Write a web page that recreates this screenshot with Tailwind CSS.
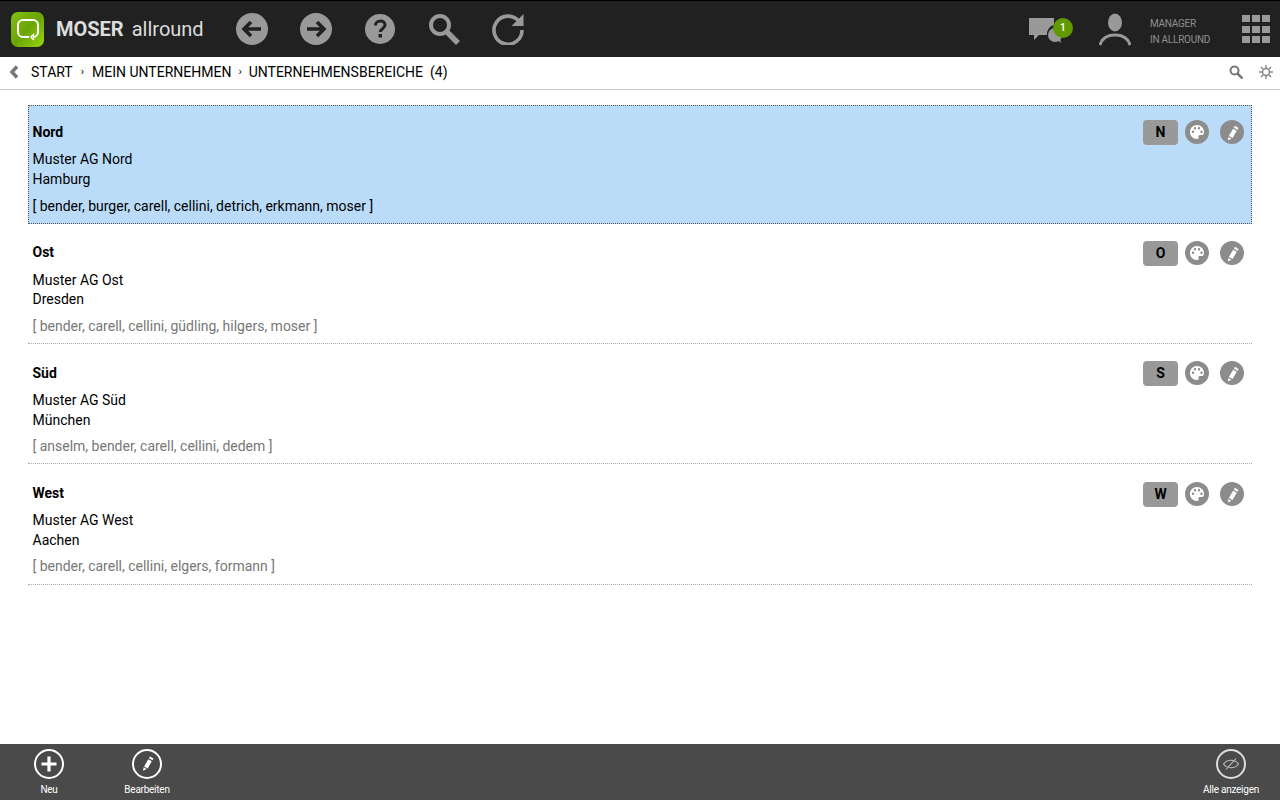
<!DOCTYPE html>
<html lang="de">
<head>
<meta charset="UTF-8">
<title>MOSER allround</title>
<script src="https://cdn.jsdelivr.net/npm/@tailwindcss/browser@4"></script>
</head>
<body class="bg-white font-['Roboto',sans-serif] text-[14px] text-black w-[1280px] h-[800px] overflow-hidden flex flex-col">

<!-- top bar -->
<header class="h-[57px] shrink-0 bg-[#212121] border-t border-black flex items-center text-[#999]">
  <div class="ml-[11px] w-[33px] h-[35px] rounded-[7px] bg-gradient-to-br from-[#86c012] via-[#69a506] to-[#9ad80e] flex items-center justify-center">
    <svg width="26" height="26" viewBox="0 0 26 26" fill="none" stroke="#fff" stroke-width="2"><path d="M14 21H8a5 5 0 0 1-5-5V9a5 5 0 0 1 5-5h10a5 5 0 0 1 5 5v7a5 5 0 0 1-5 5"/><path d="M19 18l-3 3 3 3" stroke-width="1.600"/></svg>
  </div>
  <div class="ml-[12px] w-[164px] text-[20px] text-[#ddd] whitespace-nowrap"><b class="font-bold">MOSER</b><span class="ml-2">allround</span></div>
  <div class="flex items-center">
    <div class="w-[64px] flex justify-center"><svg width="32" height="32" viewBox="0 0 32 32"><circle cx="16" cy="16" r="16" fill="#999"/><path d="M25 16H9M15 9l-7 7 7 7" fill="none" stroke="#212121" stroke-width="3.600"/></svg></div>
    <div class="w-[64px] flex justify-center"><svg width="32" height="32" viewBox="0 0 32 32"><circle cx="16" cy="16" r="16" fill="#999"/><path d="M7 16h16M17 9l7 7-7 7" fill="none" stroke="#212121" stroke-width="3.600"/></svg></div>
    <div class="w-[64px] flex justify-center"><svg width="30" height="30" viewBox="0 0 30 30"><circle cx="15" cy="15" r="15" fill="#999"/><path d="M10.500 11.500c0-6 9.500-6 9.500-.5 0 3.500-4.500 3.500-4.500 7" fill="none" stroke="#212121" stroke-width="3"/><rect x="13.500" y="20" width="3.500" height="3.500" fill="#212121"/></svg></div>
    <div class="w-[64px] flex justify-center"><svg width="32" height="32" viewBox="0 0 32 32" fill="none" stroke="#999"><circle cx="12" cy="12" r="9" stroke-width="4"/><path d="M19 19l11 11" stroke-width="5.500"/></svg></div>
    <div class="w-[64px] flex justify-center"><svg width="32" height="32" viewBox="0 0 32 32" fill="none"><path d="M27 8.500A14 14 0 1 0 30 17" stroke="#999" stroke-width="3.600"/><path d="M31.500 1v12h-12z" fill="#999"/></svg></div>
  </div>
  <div class="ml-auto flex items-center">
    <div class="relative w-[46px] h-[32px]">
      <svg width="34" height="28" viewBox="0 0 34 28" class="absolute left-0 top-[3px]" fill="#999"><path d="M0 2h25v7a9 9 0 0 0-7 10H10l-5 5v-5H0z"/><circle cx="26" cy="19" r="7"/><path d="M28 24l4 3-1-5z"/></svg>
      <span class="absolute left-[24px] top-[5px] w-5 h-5 rounded-full bg-[#5f9a00] text-white text-[11px] font-medium flex items-center justify-center">1</span>
    </div>
    <div class="ml-[24px] w-[32px]">
      <svg width="32" height="33" viewBox="0 0 32 33" fill="#999"><ellipse cx="16" cy="9.500" rx="7" ry="9"/><path d="M1 32c2-7 8-10 15-10s13 3 15 10" fill="none" stroke="#999" stroke-width="3"/></svg>
    </div>
    <div class="ml-[19px] w-[92px] pt-[6px] text-[10px] leading-[16px] tracking-[-0.25px] text-[#8f8f8f]"><div>MANAGER</div><div>IN ALLROUND</div></div>
    <div class="mr-[10px] grid grid-cols-3 gap-x-[2px] gap-y-[3.500px]">
      <i class="w-[8px] h-[7px] bg-[#999] block"></i><i class="w-[8px] h-[7px] bg-[#999] block"></i><i class="w-[8px] h-[7px] bg-[#999] block"></i>
      <i class="w-[8px] h-[7px] bg-[#999] block"></i><i class="w-[8px] h-[7px] bg-[#999] block"></i><i class="w-[8px] h-[7px] bg-[#999] block"></i>
      <i class="w-[8px] h-[7px] bg-[#999] block"></i><i class="w-[8px] h-[7px] bg-[#999] block"></i><i class="w-[8px] h-[7px] bg-[#999] block"></i>
    </div>
  </div>
</header>

<!-- breadcrumb -->
<nav class="h-[33px] shrink-0 border-b border-[#ccc] flex items-center pb-[2px] pr-[7px]">
  <svg width="11" height="14" viewBox="0 0 11 14" class="ml-[9px]"><path d="M8 1.500L3 7l5 5.500" fill="none" stroke="#777" stroke-width="3.500"/></svg>
  <span class="ml-[11px]">START</span>
  <span class="mx-[8px] text-[11px]">›</span>
  <span>MEIN UNTERNEHMEN</span>
  <span class="mx-[7px] text-[11px]">›</span>
  <span>UNTERNEHMENSBEREICHE</span>
  <span class="ml-[7px]">(4)</span>
  <svg width="14" height="14" viewBox="0 0 14 14" fill="none" stroke="#777" class="ml-auto"><circle cx="5.500" cy="5.500" r="4" stroke-width="2"/><path d="M8.500 8.500l5 5" stroke-width="2.500"/></svg>
  <svg width="14" height="14" viewBox="0 0 14 14" fill="none" stroke="#888" class="ml-[16px]"><circle cx="7" cy="7" r="3.500" stroke-width="1.500"/><path d="M7 0v3M7 11v3M0 7h3M11 7h3M2 2l2 2M10 10l2 2M12 2l-2 2M4 10l-2 2" stroke-width="1.500"/></svg>
</nav>

<!-- list -->
<main class="flex-1 pt-[15px] px-[28px]">
  <section class="h-[119px] border border-dotted border-[#555] bg-[#badcf9] pl-[3.500px] pr-1 pt-[16px] flex justify-between">
    <div>
      <div class="font-bold leading-[20px]">Nord</div>
      <div class="mt-[7px] leading-[20px]">Muster AG Nord<br>Hamburg</div>
      <div class="mt-[7px] leading-[20px]">[ bender, burger, carell, cellini, detrich, erkmann, moser ]</div>
    </div>
    <div class="flex items-start mr-[3px] -mt-[2px]">
      <span class="w-[35px] h-[25px] rounded-[4px] bg-[#999] font-bold flex items-center justify-center">N</span>
      <span class="ml-[7px] w-6 h-6 rounded-full bg-[#8c8c8c] flex items-center justify-center"><svg width="14" height="14" viewBox="0 0 14 14"><path fill-rule="evenodd" fill="#fff" d="M7 0C3 0 0 3 0 7s3 7 7 7c1.500 0 2-1 1.500-2-.5-1.200.3-2 1.500-2h2c1.300 0 2-1 2-3 0-4-3-7-7-7zM3 8a1.200 1.200 0 1 1 0-2.400A1.200 1.200 0 0 1 3 8zm2-3.500a1.200 1.200 0 1 1 0-2.400 1.200 1.200 0 0 1 0 2.400zm4 0a1.200 1.200 0 1 1 0-2.400 1.200 1.200 0 0 1 0 2.400zM11.500 8a1.200 1.200 0 1 1 0-2.400 1.200 1.200 0 0 1 0 2.400z"/></svg></span>
      <span class="ml-[11px] w-6 h-6 rounded-full bg-[#8c8c8c] flex items-center justify-center"><svg width="17" height="17" viewBox="0 0 14 14" fill="#fff"><path d="M9 1.500l3 1.700-.9 1.600-3-1.700zM7.500 3.900l3 1.700-3.500 6-3-1.700zM3.500 10.700l2.500 1.500-2.600 1.300z"/></svg></span>
    </div>
  </section>

  <section class="h-[120px] border-b border-dotted border-[#aaa] pl-[4.500px] pr-[5px] pt-[18px] flex justify-between">
    <div>
      <div class="font-bold leading-[20px]">Ost</div>
      <div class="mt-[8.500px] leading-[19.500px]">Muster AG Ost<br>Dresden</div>
      <div class="mt-[6.500px] leading-[20px] text-[#777]">[ bender, carell, cellini, güdling, hilgers, moser ]</div>
    </div>
    <div class="flex items-start mr-[3px] -mt-px">
      <span class="w-[35px] h-[25px] rounded-[4px] bg-[#999] font-bold flex items-center justify-center">O</span>
      <span class="ml-[7px] w-6 h-6 rounded-full bg-[#8c8c8c] flex items-center justify-center"><svg width="14" height="14" viewBox="0 0 14 14"><path fill-rule="evenodd" fill="#fff" d="M7 0C3 0 0 3 0 7s3 7 7 7c1.500 0 2-1 1.500-2-.5-1.200.3-2 1.500-2h2c1.300 0 2-1 2-3 0-4-3-7-7-7zM3 8a1.200 1.200 0 1 1 0-2.400A1.200 1.200 0 0 1 3 8zm2-3.500a1.200 1.200 0 1 1 0-2.400 1.200 1.200 0 0 1 0 2.400zm4 0a1.200 1.200 0 1 1 0-2.400 1.200 1.200 0 0 1 0 2.400zM11.500 8a1.200 1.200 0 1 1 0-2.400 1.200 1.200 0 0 1 0 2.400z"/></svg></span>
      <span class="ml-[11px] w-6 h-6 rounded-full bg-[#8c8c8c] flex items-center justify-center"><svg width="17" height="17" viewBox="0 0 14 14" fill="#fff"><path d="M9 1.500l3 1.700-.9 1.600-3-1.700zM7.500 3.900l3 1.700-3.500 6-3-1.700zM3.500 10.700l2.500 1.500-2.600 1.300z"/></svg></span>
    </div>
  </section>

  <section class="h-[120px] border-b border-dotted border-[#aaa] pl-[4.500px] pr-[5px] pt-[19px] flex justify-between">
    <div>
      <div class="font-bold leading-[20px]">Süd</div>
      <div class="mt-[7px] leading-[20px]">Muster AG Süd<br>München</div>
      <div class="mt-[6px] leading-[20px] text-[#777]">[ anselm, bender, carell, cellini, dedem ]</div>
    </div>
    <div class="flex items-start mr-[3px] -mt-[2px]">
      <span class="w-[35px] h-[25px] rounded-[4px] bg-[#999] font-bold flex items-center justify-center">S</span>
      <span class="ml-[7px] w-6 h-6 rounded-full bg-[#8c8c8c] flex items-center justify-center"><svg width="14" height="14" viewBox="0 0 14 14"><path fill-rule="evenodd" fill="#fff" d="M7 0C3 0 0 3 0 7s3 7 7 7c1.500 0 2-1 1.500-2-.5-1.200.3-2 1.500-2h2c1.300 0 2-1 2-3 0-4-3-7-7-7zM3 8a1.200 1.200 0 1 1 0-2.400A1.200 1.200 0 0 1 3 8zm2-3.500a1.200 1.200 0 1 1 0-2.400 1.200 1.200 0 0 1 0 2.400zm4 0a1.200 1.200 0 1 1 0-2.400 1.200 1.200 0 0 1 0 2.400zM11.500 8a1.200 1.200 0 1 1 0-2.400 1.200 1.200 0 0 1 0 2.400z"/></svg></span>
      <span class="ml-[11px] w-6 h-6 rounded-full bg-[#8c8c8c] flex items-center justify-center"><svg width="17" height="17" viewBox="0 0 14 14" fill="#fff"><path d="M9 1.500l3 1.700-.9 1.600-3-1.700zM7.500 3.900l3 1.700-3.500 6-3-1.700zM3.500 10.700l2.500 1.500-2.600 1.300z"/></svg></span>
    </div>
  </section>

  <section class="h-[121px] border-b border-dotted border-[#aaa] pl-[4.500px] pr-[5px] pt-[19px] flex justify-between">
    <div>
      <div class="font-bold leading-[20px]">West</div>
      <div class="mt-[7px] leading-[20px]">Muster AG West<br>Aachen</div>
      <div class="mt-[6px] leading-[20px] text-[#777]">[ bender, carell, cellini, elgers, formann ]</div>
    </div>
    <div class="flex items-start mr-[3px] -mt-px">
      <span class="w-[35px] h-[25px] rounded-[4px] bg-[#999] font-bold flex items-center justify-center">W</span>
      <span class="ml-[7px] w-6 h-6 rounded-full bg-[#8c8c8c] flex items-center justify-center"><svg width="14" height="14" viewBox="0 0 14 14"><path fill-rule="evenodd" fill="#fff" d="M7 0C3 0 0 3 0 7s3 7 7 7c1.500 0 2-1 1.500-2-.5-1.200.3-2 1.500-2h2c1.300 0 2-1 2-3 0-4-3-7-7-7zM3 8a1.200 1.200 0 1 1 0-2.400A1.200 1.200 0 0 1 3 8zm2-3.500a1.200 1.200 0 1 1 0-2.400 1.200 1.200 0 0 1 0 2.400zm4 0a1.200 1.200 0 1 1 0-2.400 1.200 1.200 0 0 1 0 2.400zM11.500 8a1.200 1.200 0 1 1 0-2.400 1.200 1.200 0 0 1 0 2.400z"/></svg></span>
      <span class="ml-[11px] w-6 h-6 rounded-full bg-[#8c8c8c] flex items-center justify-center"><svg width="17" height="17" viewBox="0 0 14 14" fill="#fff"><path d="M9 1.500l3 1.700-.9 1.600-3-1.700zM7.500 3.900l3 1.700-3.500 6-3-1.700zM3.500 10.700l2.500 1.500-2.600 1.300z"/></svg></span>
    </div>
  </section>
</main>

<!-- bottom bar -->
<footer class="h-[56px] shrink-0 bg-[#4a4a4a] flex justify-between text-white text-[10px] tracking-[-0.25px] pt-[5px]">
  <div class="flex">
    <div class="w-[98px] flex flex-col items-center">
      <svg width="30" height="30" viewBox="0 0 30 30" fill="none" stroke="#fff"><circle cx="15" cy="15" r="14" stroke-width="2"/><path d="M15 7.500v15M7.500 15h15" stroke-width="3.200"/></svg>
      <span class="mt-[4px] leading-[14px]">Neu</span>
    </div>
    <div class="w-[98px] flex flex-col items-center">
      <svg width="30" height="30" viewBox="0 0 30 30" fill="none"><circle cx="15" cy="15" r="14" stroke="#fff" stroke-width="2"/><path fill="#fff" d="M18 7.500l3.500 2-1 1.800-3.500-2zM16.300 10.300l3.500 2-4.200 7.200-3.500-2zM11.600 18.300l3 1.700-3.500 1.800z"/></svg>
      <span class="mt-[4px] leading-[14px]">Bearbeiten</span>
    </div>
  </div>
  <div class="w-[98px] flex flex-col items-center">
    <svg width="30" height="30" viewBox="0 0 30 30" fill="none" stroke="#bbb"><circle cx="15" cy="15" r="14" stroke="#ddd" stroke-width="2"/><path d="M7.500 15c3.500-5 11.500-5 15 0-3.500 5-11.500 5-15 0zM20 9.500L10 20.500" stroke-width="1.100"/></svg>
    <span class="mt-[4px] leading-[14px]">Alle anzeigen</span>
  </div>
</footer>
</body>
</html>
